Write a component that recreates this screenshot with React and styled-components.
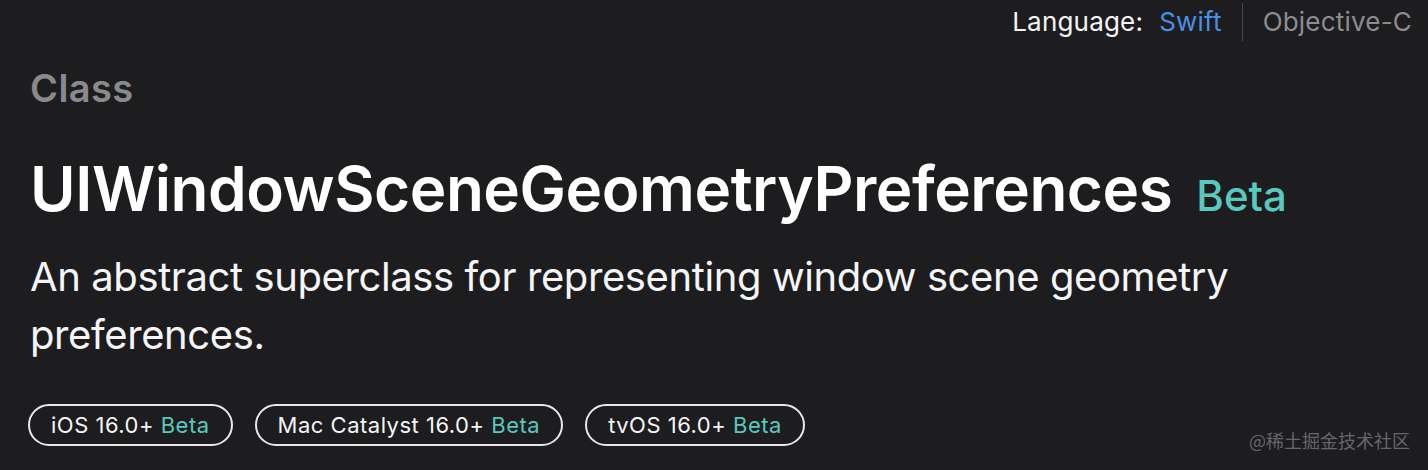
import React from "react";
import styled, { createGlobalStyle } from "styled-components";

const GlobalStyle = createGlobalStyle`
  html, body {
    margin: 0;
    padding: 0;
    background: #1d1d1f;
  }
  body {
    font-family: Inter, "Noto Sans", "Noto Sans CJK SC", sans-serif;
    color: #f5f5f7;
    -webkit-font-smoothing: antialiased;
  }
`;

const Page = styled.div`
  position: relative;
  width: 1428px;
  height: 470px;
  background: #1d1d1f;
  overflow: hidden;
  box-sizing: border-box;
  padding: 0 16px 0 30px;
  display: flex;
  flex-direction: column;
`;

const LanguageBar = styled.nav`
  display: flex;
  justify-content: flex-end;
  align-items: center;
  height: 44px;
  font-size: 26px;
  line-height: 44px;
`;

const LangLabel = styled.span`
  color: #f5f5f7;
  margin-right: 16px;
  letter-spacing: 0.2px;
`;

const LangOption = styled.span`
  color: ${(p) => (p.$active ? "#4a8fe2" : "#8c8c8f")};
  letter-spacing: 0.2px;
`;

const Divider = styled.span`
  width: 1px;
  height: 38px;
  background: #4a4a4d;
  margin: 0 20px 0 20px;
`;

const Eyebrow = styled.div`
  margin-top: 22px;
  font-size: 38px;
  line-height: 44px;
  font-weight: 600;
  color: #8a8a8d;
  letter-spacing: 0.4px;
`;

const Title = styled.h1`
  margin: 43px 0 0 0;
  font-size: 62px;
  line-height: 72px;
  font-weight: 600;
  color: #ffffff;
  letter-spacing: -0.45px;
  white-space: nowrap;
`;

const TitleBadge = styled.span`
  font-size: 42px;
  line-height: 1;
  font-weight: 500;
  color: #5ac8be;
  margin-left: 24px;
  letter-spacing: 0;
`;

const Abstract = styled.p`
  margin: 23px 0 0 0;
  font-size: 40px;
  line-height: 58px;
  font-weight: 400;
  color: #f5f5f7;
  letter-spacing: -0.4px;
  max-width: 1240px;
`;

const Availability = styled.ul`
  list-style: none;
  margin: 40px 0 0 -2px;
  padding: 0;
  display: flex;
  gap: 22px;
`;

const Pill = styled.li`
  box-sizing: border-box;
  height: 42px;
  border: 2px solid #e8e8ea;
  border-radius: 21px;
  padding: 0 21px;
  font-size: 22px;
  line-height: 38px;
  letter-spacing: 0.5px;
  color: #f5f5f7;
  white-space: nowrap;
`;

const PillBeta = styled.span`
  color: #5ac8be;
`;

const Watermark = styled.div`
  position: absolute;
  right: 18px;
  bottom: 20px;
  font-size: 18px;
  line-height: 20px;
  color: #66666a;
  font-family: "Noto Sans CJK SC", "Noto Sans", sans-serif;
`;

const platforms = ["iOS 16.0+", "Mac Catalyst 16.0+", "tvOS 16.0+"];

export default function App() {
  return (
    <>
      <GlobalStyle />
      <Page>
        <LanguageBar>
          <LangLabel>Language:</LangLabel>
          <LangOption $active>Swift</LangOption>
          <Divider />
          <LangOption>Objective-C</LangOption>
        </LanguageBar>
        <Eyebrow>Class</Eyebrow>
        <Title>
          UIWindowSceneGeometryPreferences
          <TitleBadge>Beta</TitleBadge>
        </Title>
        <Abstract>
          An abstract superclass for representing window scene geometry
          preferences.
        </Abstract>
        <Availability>
          {platforms.map((p) => (
            <Pill key={p}>
              {p} <PillBeta>Beta</PillBeta>
            </Pill>
          ))}
        </Availability>
        <Watermark>@稀土掘金技术社区</Watermark>
      </Page>
    </>
  );
}
